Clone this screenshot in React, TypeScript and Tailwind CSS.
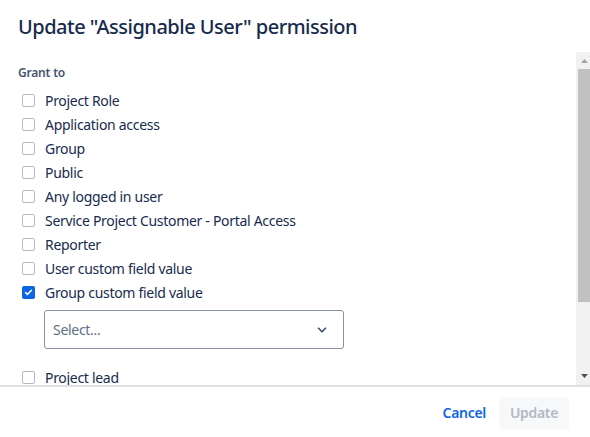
import { Check, ChevronDown } from "lucide-react";

const options = [
  { label: "Project Role", checked: false },
  { label: "Application access", checked: false },
  { label: "Group", checked: false },
  { label: "Public", checked: false },
  { label: "Any logged in user", checked: false },
  { label: "Service Project Customer - Portal Access", checked: false },
  { label: "Reporter", checked: false },
  { label: "User custom field value", checked: false },
  { label: "Group custom field value", checked: true },
];

function Checkbox({ checked }: { checked: boolean }) {
  if (checked) {
    return (
      <span className="flex h-[13px] w-[13px] items-center justify-center rounded-[2px] bg-[#0c66e4]">
        <Check className="h-[9px] w-[9px] text-white" strokeWidth={4} />
      </span>
    );
  }
  return <span className="h-[13px] w-[13px] rounded-[2px] border-[1.5px] border-[#b3b9c4] bg-white" />;
}

function Row({ label, checked }: { label: string; checked: boolean }) {
  return (
    <label className="flex h-[24px] items-center pl-[4px]">
      <Checkbox checked={checked} />
      <span className="ml-[10px] text-[14px] tracking-[-0.3px] text-[#172b4d]">{label}</span>
    </label>
  );
}

export default function App() {
  return (
    <div
      className="flex h-[437px] w-[590px] flex-col overflow-hidden bg-white"
      style={{ fontFamily: '"Noto Sans", "Open Sans", sans-serif' }}
    >
      {/* Header */}
      <div className="h-[52px] shrink-0 px-[18px] pt-[14px]">
        <h1 className="text-[20px] leading-[26px] font-medium tracking-[-0.5px] text-[#172b4d]">
          Update "Assignable User" permission
        </h1>
      </div>

      {/* Body */}
      <div className="flex h-[333px] shrink-0">
        <div className="flex-1 overflow-hidden pl-[18px] pt-[13px]">
          <p className="text-[12px] leading-[16px] font-semibold tracking-[-0.2px] text-[#44546f]">Grant to</p>
          <div className="mt-[7px] flex flex-col">
            {options.map((o) => (
              <Row key={o.label} label={o.label} checked={o.checked} />
            ))}
          </div>
          <div className="ml-[26px] mt-[6px] flex h-[39px] w-[300px] items-center justify-between rounded-[3px] border border-[#8590a2] pl-[8px] pr-[14px]">
            <span className="text-[14px] tracking-[-0.3px] text-[#626f86]">Select...</span>
            <ChevronDown className="h-[14px] w-[14px] text-[#44546f]" strokeWidth={3} />
          </div>
          <div className="mt-[16px]">
            <Row label="Project lead" checked={false} />
          </div>
        </div>

        {/* Scrollbar */}
        <div className="flex w-[14px] flex-col bg-[#f1f1f1]">
          <div className="flex h-[17px] items-center justify-center pl-[2px]">
            <svg width="7" height="4" viewBox="0 0 7 4">
              <path d="M3.5 0L7 4H0z" fill="#a3a3a3" />
            </svg>
          </div>
          <div className="ml-[2px] h-[233px] bg-[#c1c1c1]" />
          <div className="flex-1" />
          <div className="flex h-[17px] items-center justify-center pl-[2px] pb-[1px]">
            <svg width="7" height="4" viewBox="0 0 7 4">
              <path d="M0 0H7L3.5 4z" fill="#505050" />
            </svg>
          </div>
        </div>
      </div>

      {/* Footer */}
      <div className="flex flex-1 items-center justify-end border-t-2 border-[#dfe1e6] pr-[21px] pt-[1px]">
        <button className="px-[12px] text-[14px] font-semibold tracking-[-0.3px] text-[#0c66e4]">Cancel</button>
        <button className="ml-[1px] h-[32px] w-[70px] rounded-[3px] bg-[#f7f8f9] text-[14px] font-semibold tracking-[-0.3px] text-[#b3b9c4]">
          Update
        </button>
      </div>
    </div>
  );
}
